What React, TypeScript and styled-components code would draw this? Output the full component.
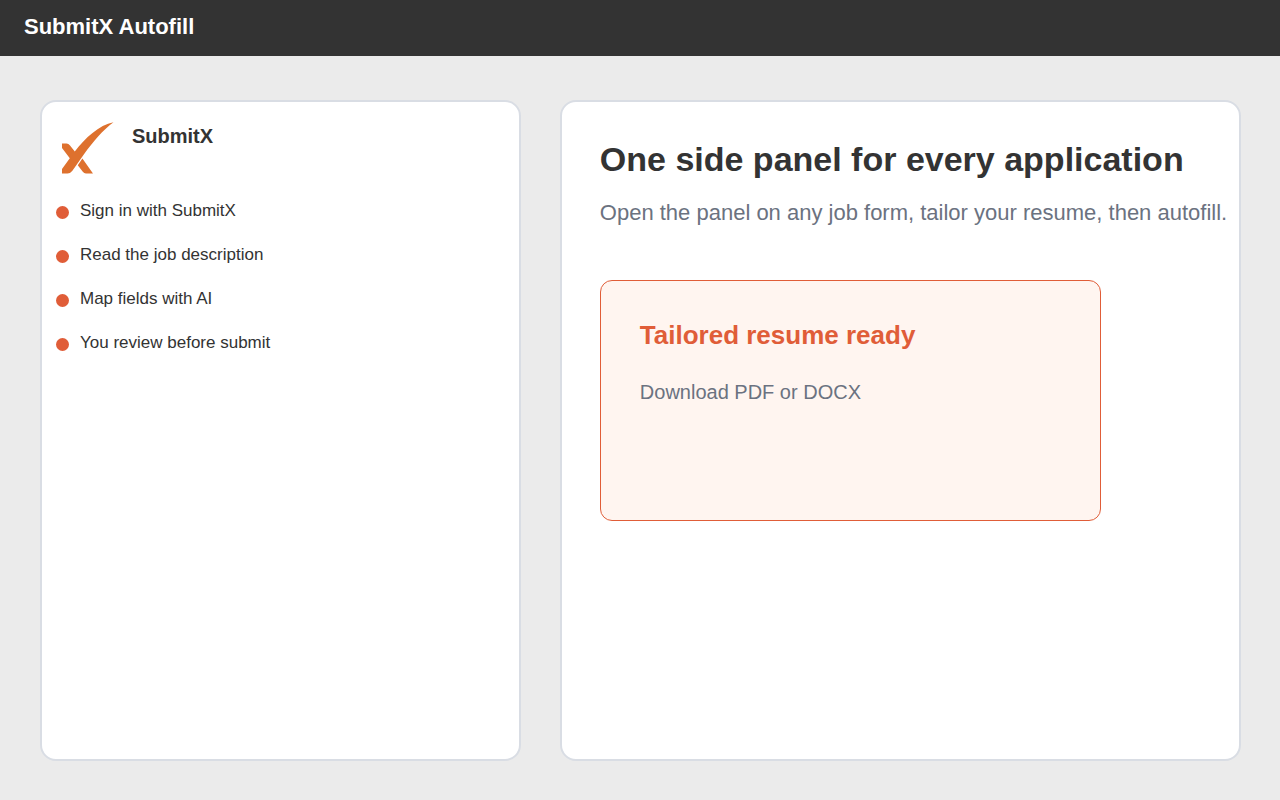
import React from "react";
import styled, { createGlobalStyle } from "styled-components";

const GlobalStyle = createGlobalStyle`
  *, *::before, *::after { box-sizing: border-box; }
  body {
    margin: 0;
    background: #ebebeb;
    color: #333333;
    font-family: "Liberation Sans", Arial, sans-serif;
  }
  h1, h2, h3, p, ul { margin: 0; padding: 0; }
`;

const Page = styled.div`
  display: flex;
  flex-direction: column;
  min-height: 100vh;
`;

const TopBar = styled.header`
  display: flex;
  align-items: center;
  height: 56px;
  padding: 0 24px 2px;
  background: #333333;
`;

const AppTitle = styled.p`
  color: #ffffff;
  font-size: 22px;
  font-weight: 700;
  line-height: 24px;
`;

const Columns = styled.main`
  flex: 1;
  display: grid;
  grid-template-columns: minmax(0, 12fr) minmax(0, 17fr);
  gap: 39px;
  padding: 44px 39px 39px 40px;
`;

const Card = styled.section`
  background: #ffffff;
  border: 2px solid #d9dde4;
  border-radius: 16px;
`;

const SideCard = styled(Card)`
  padding: 18px 14px;
`;

const MainCard = styled(Card)`
  padding: 35px 10px 35px 38px;
`;

const Brand = styled.div`
  display: flex;
  align-items: flex-start;
  gap: 16px;
  padding-left: 4px;
`;

const Logo = styled.svg`
  flex: none;
  width: 56px;
  height: 56px;
`;

const BrandName = styled.h2`
  padding-top: 4px;
  font-size: 20px;
  line-height: 24px;
`;

const Steps = styled.ul`
  display: flex;
  flex-direction: column;
  gap: 20px;
  padding-top: 23px;
  list-style: none;
`;

const Step = styled.li`
  display: flex;
  align-items: center;
  gap: 11px;
  font-size: 17px;
  line-height: 24px;

  &::before {
    content: "";
    flex: none;
    width: 13px;
    height: 13px;
    margin-top: 2px;
    border-radius: 50%;
    background: #e05d38;
  }
`;

const Heading = styled.h1`
  font-size: 34px;
  line-height: 44px;
`;

const Lead = styled.p`
  padding-top: 20px;
  color: #6b7280;
  font-size: 22px;
  line-height: 24px;
`;

const ResultBox = styled.article`
  width: 100%;
  max-width: 501px;
  min-height: 241px;
  margin-top: 55px;
  padding: 38px 39px;
  background: #fff5f0;
  border: 1px solid #e05d38;
  border-radius: 12px;
`;

const ResultTitle = styled.h3`
  color: #e05d38;
  font-size: 26px;
  line-height: 32px;
`;

const ResultText = styled.p`
  padding-top: 29px;
  color: #6b7280;
  font-size: 20px;
  line-height: 24px;
`;

const steps = [
  "Sign in with SubmitX",
  "Read the job description",
  "Map fields with AI",
  "You review before submit",
];

export default function App() {
  return (
    <>
      <GlobalStyle />
      <Page>
        <TopBar>
          <AppTitle>SubmitX Autofill</AppTitle>
        </TopBar>
        <Columns>
          <SideCard>
            <Brand>
              <Logo viewBox="0 0 56 56" fill="#de712e" aria-hidden="true">
                <path d="M2 23.6H6.5Q8.5 23.6 10 25.4L14.8 31.6C25 18 39 5 53.5 2.2C43 10 33.5 21 23.8 34.5L12.4 50.8Q10.5 53.5 7.5 53.5H2V49L9.8 38.3L2 28Z" />
                <path d="M22.4 38.6L33 53.5H26Q24 53.5 22.8 51.8L17.8 45.2Z" />
              </Logo>
              <BrandName>SubmitX</BrandName>
            </Brand>
            <Steps>
              {steps.map((step) => (
                <Step key={step}>{step}</Step>
              ))}
            </Steps>
          </SideCard>
          <MainCard>
            <Heading>One side panel for every application</Heading>
            <Lead>Open the panel on any job form, tailor your resume, then autofill.</Lead>
            <ResultBox>
              <ResultTitle>Tailored resume ready</ResultTitle>
              <ResultText>Download PDF or DOCX</ResultText>
            </ResultBox>
          </MainCard>
        </Columns>
      </Page>
    </>
  );
}
